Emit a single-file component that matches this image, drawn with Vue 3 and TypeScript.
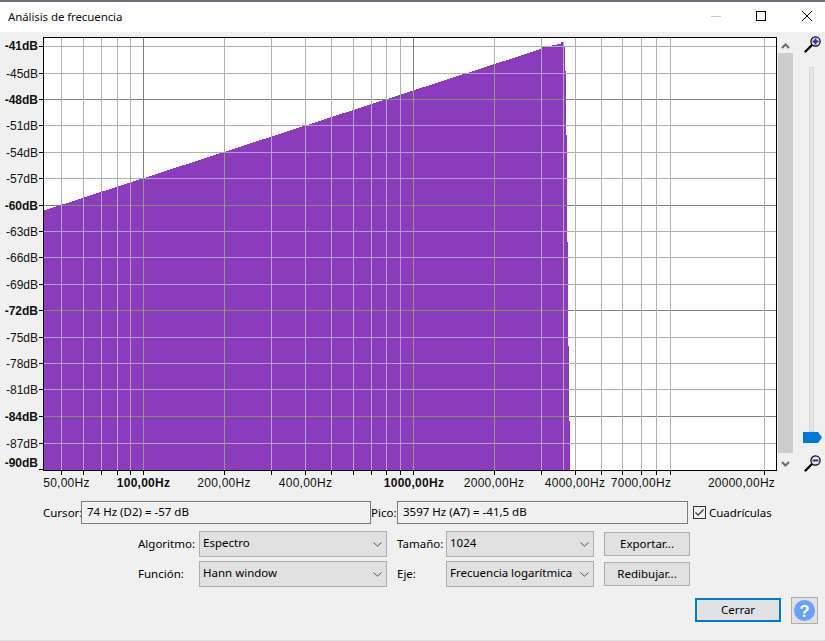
<template>
  <div class="window">
    <div class="titlebar">
      <span class="title">Análisis de frecuencia</span>
      <svg class="controls" width="117" height="30" viewBox="0 0 117 30" shape-rendering="crispEdges">
        <rect x="3" y="14" width="10" height="1" fill="#c4c4c4" />
        <rect x="48.5" y="9.5" width="9" height="9" fill="none" stroke="#000" />
        <path d="M94 9 L104 19 M104 9 L94 19" stroke="#000" fill="none" shape-rendering="auto" />
      </svg>
    </div>

    <div class="chart-row">
      <svg class="plot" width="778" height="458" viewBox="0 32 778 458" shape-rendering="crispEdges">
        <rect x="43" y="37" width="734" height="434" fill="#fff" />
        <polygon :points="spectrum" fill="#8b3cbc" />

        <!-- grid, the lines take another colour over the purple -->
        <g v-for="l in dbLines" :key="'h' + l.y">
          <rect x="44" :y="l.y" width="732" height="1" :fill="l.major ? '#808080' : '#b0b0b0'" />
          <rect :x="l.from" :y="l.y" :width="l.to - l.from" height="1" :fill="l.major ? '#7f8a72' : '#b79cd0'" />
          <rect x="39" :y="l.y" width="4" height="1" fill="#000" />
        </g>
        <g v-for="x in freqLines" :key="'v' + x.x">
          <rect :x="x.x" y="38" width="1" :height="topAt(x.x) - 38" :fill="x.major ? '#808080' : '#b0b0b0'" />
          <rect :x="x.x" :y="topAt(x.x)" width="1" :height="470 - topAt(x.x)" :fill="x.tone" />
          <rect :x="x.x" y="470" width="1" height="5" fill="#000" />
        </g>
        <rect x="563" y="42" width="1" height="428" fill="#b3a6bb" />

        <rect x="39" y="469" width="4" height="1" fill="#000" />
        <rect x="43.5" y="37.5" width="733" height="433" fill="none" stroke="#000" />

        <text
          v-for="t in dbLabels"
          :key="t.text"
          class="axis"
          :class="{ bold: t.bold }"
          x="38"
          :y="t.y"
          text-anchor="end"
        >{{ t.text }}</text>
        <text
          v-for="t in hzLabels"
          :key="t.text"
          class="axis hz"
          :class="{ bold: t.bold }"
          :x="t.x"
          y="487"
          text-anchor="middle"
        >{{ t.text }}</text>
      </svg>

      <div class="scrollbar">
        <div class="arrow up">
          <svg width="9" height="6" viewBox="0 0 9 6"><path d="M1 5 L4.5 1.5 L8 5" fill="none" stroke="#6a6a6a" stroke-width="2" /></svg>
        </div>
        <div class="thumb"></div>
        <div class="arrow down">
          <svg width="9" height="6" viewBox="0 0 9 6"><path d="M1 1 L4.5 4.5 L8 1" fill="none" stroke="#6a6a6a" stroke-width="2" /></svg>
        </div>
      </div>

      <div class="zoom">
        <svg class="mag" width="18" height="17" viewBox="0 0 18 17">
          <path d="M1.5 15.5 L7.5 9.5" stroke="#000" stroke-width="2.4" stroke-linecap="round" />
          <circle cx="11.5" cy="5.5" r="4.6" fill="#e8e8f4" stroke="#000" stroke-width="1.2" />
          <path d="M11.5 2.6 V8.4 M8.6 5.5 H14.4" stroke="#2a2ab0" stroke-width="2" />
        </svg>
        <div class="track"></div>
        <svg class="knob" width="19" height="11" viewBox="0 0 19 11"><path d="M0 0 H15 L19 5.5 L15 11 H0 Z" fill="#0078d7" /></svg>
        <svg class="mag out" width="18" height="17" viewBox="0 0 18 17">
          <path d="M1.5 15.5 L7.5 9.5" stroke="#000" stroke-width="2.4" stroke-linecap="round" />
          <circle cx="11.5" cy="5.5" r="4.6" fill="#e8e8f4" stroke="#000" stroke-width="1.2" />
          <path d="M8.6 5.5 H14.4" stroke="#2a2ab0" stroke-width="2" />
        </svg>
      </div>
    </div>

    <div class="readout">
      <label class="l-cursor">Cursor:</label>
      <div class="field f-cursor">74 Hz (D2) = -57 dB</div>
      <label class="l-pico">Pico:</label>
      <div class="field f-pico">3597 Hz (A7) = -41,5 dB</div>
      <span class="check">
        <svg width="13" height="13" viewBox="0 0 13 13">
          <rect x="0.5" y="0.5" width="12" height="12" fill="#f0f0f0" stroke="#333" />
          <path d="M2.5 6.5 L5.2 9.2 L10.5 3.5" fill="none" stroke="#333" stroke-width="1.2" />
        </svg>
      </span>
      <label class="l-grid">Cuadrículas</label>
    </div>

    <div v-for="row in rows" :key="row.label" class="row" :class="row.cls">
      <label class="l-first">{{ row.label }}</label>
      <div class="select s-first">
        <span>{{ row.value }}</span>
        <svg width="9" height="5" viewBox="0 0 9 5"><path d="M0.5 0.5 L4.5 4.2 L8.5 0.5" fill="none" stroke="#555" /></svg>
      </div>
      <label class="l-second">{{ row.label2 }}</label>
      <div class="select s-second">
        <span>{{ row.value2 }}</span>
        <svg width="9" height="5" viewBox="0 0 9 5"><path d="M0.5 0.5 L4.5 4.2 L8.5 0.5" fill="none" stroke="#555" /></svg>
      </div>
      <button class="btn side">{{ row.action }}</button>
    </div>

    <div class="footer">
      <button class="btn close">Cerrar</button>
      <div class="help">
        <svg width="21" height="21" viewBox="0 0 21 21">
          <circle cx="10.5" cy="10.5" r="10.5" fill="#6a9eff" />
          <text x="10.5" y="16.5" text-anchor="middle" class="q">?</text>
        </svg>
      </div>
    </div>
  </div>
</template>

<script setup lang="ts">
const slope = 0.3263

// right side of the spectrum drops in small stairs
const stairs: [number, number][] = [
  [565, 71],
  [566, 135],
  [567, 242],
  [568, 346],
  [569, 421],
  [570, 470]
]

function rightEdge(y: number): number {
  const stair = stairs.find((s) => y < s[1])
  return stair ? stair[0] : 570
}

function leftEdge(y: number): number {
  return y > 210 ? 44 : Math.round(44 + (210.5 - y) / slope)
}

const majorDb = [99, 205, 310, 416]
const dbLines = [46, 73, 99, 125, 152, 178, 205, 231, 257, 284, 310, 337, 363, 389, 416, 443].map((y) => {
  // above the top of the spectrum the whole line stays on white
  const from = y < 47 ? 0 : leftEdge(y)
  const to = y < 47 ? 0 : rightEdge(y)
  return { y, major: majorDb.includes(y), from, to }
})

const lilac = '#b7a2cb'
const green = '#909c80'
const freqLines = [
  { x: 61, major: false, tone: lilac },
  { x: 83, major: false, tone: lilac },
  { x: 101, major: false, tone: lilac },
  { x: 117, major: false, tone: lilac },
  { x: 130, major: false, tone: '#ad9fbb' },
  { x: 143, major: true, tone: green },
  { x: 224, major: false, tone: green },
  { x: 271, major: false, tone: lilac },
  { x: 305, major: false, tone: lilac },
  { x: 331, major: false, tone: lilac },
  { x: 353, major: false, tone: lilac },
  { x: 371, major: false, tone: lilac },
  { x: 386, major: false, tone: lilac },
  { x: 400, major: false, tone: '#ad9fbb' },
  { x: 413, major: true, tone: green },
  { x: 494, major: false, tone: green },
  { x: 541, major: false, tone: lilac },
  { x: 575, major: false, tone: '#b0b0b0' },
  { x: 601, major: false, tone: '#b0b0b0' },
  { x: 622, major: false, tone: '#b0b0b0' },
  { x: 641, major: false, tone: '#b0b0b0' },
  { x: 656, major: false, tone: '#b0b0b0' },
  { x: 670, major: false, tone: '#b0b0b0' },
  { x: 764, major: false, tone: '#b0b0b0' }
]

const spectrum = [
  '44,210.5',
  '541,49',
  '542,47',
  '552,47',
  '552,45',
  '557,45',
  '557,43.5',
  '561,43.5',
  '561,42',
  '564,42',
  '564,46',
  '565,46',
  ...stairs.flatMap(([x, y], i) => (i < stairs.length - 1 ? [`${x},${y}`, `${x + 1},${y}`] : [`${x},${y}`])),
  '44,470'
].join(' ')

function topAt(x: number): number {
  if (x > 570) return 470
  return Math.round(210.5 - (x - 44) * slope)
}

const dbLabels = [
  ['-41dB', 50, true],
  ['-45dB', 78, false],
  ['-48dB', 104, true],
  ['-51dB', 130, false],
  ['-54dB', 157, false],
  ['-57dB', 183, false],
  ['-60dB', 210, true],
  ['-63dB', 236, false],
  ['-66dB', 262, false],
  ['-69dB', 289, false],
  ['-72dB', 315, true],
  ['-75dB', 342, false],
  ['-78dB', 368, false],
  ['-81dB', 394, false],
  ['-84dB', 421, true],
  ['-87dB', 448, false],
  ['-90dB', 467, true]
].map(([text, y, bold]) => ({ text: text as string, y: y as number, bold: bold as boolean }))

const hzLabels = [
  { text: '50,00Hz', x: 66.5, bold: false },
  { text: '100,00Hz', x: 143.5, bold: true },
  { text: '200,00Hz', x: 224, bold: false },
  { text: '400,00Hz', x: 305.5, bold: false },
  { text: '1000,00Hz', x: 414, bold: true },
  { text: '2000,00Hz', x: 494, bold: false },
  { text: '4000,00Hz', x: 575, bold: false },
  { text: '7000,00Hz', x: 641, bold: false },
  { text: '20000,00Hz', x: 741.5, bold: false }
]

const rows = [
  { cls: 'r-alg', label: 'Algoritmo:', value: 'Espectro', label2: 'Tamaño:', value2: '1024', action: 'Exportar...' },
  { cls: 'r-fun', label: 'Función:', value: 'Hann window', label2: 'Eje:', value2: 'Frecuencia logarítmica', action: 'Redibujar...' }
]
</script>

<style>
html,
body {
  margin: 0;
  background: #f0f0f0;
}
</style>

<style scoped>
.window {
  width: 825px;
  height: 641px;
  box-sizing: border-box;
  overflow: hidden;
  display: flex;
  flex-direction: column;
  background: #f0f0f0;
  border-top: 2px solid #70707c;
  border-bottom: 1px solid #dedede;
  font-family: "Noto Sans", "Open Sans", sans-serif;
  font-size: 11.5px;
  color: #000;
}

.titlebar {
  height: 30px;
  flex: none;
  display: flex;
  align-items: center;
  justify-content: space-between;
  background: #fff;
  padding-left: 8px;
  color: #111;
}

.title {
  margin-top: -2px;
  letter-spacing: -0.1px;
}

.chart-row {
  flex: none;
  height: 458px;
  display: flex;
}

.plot {
  flex: none;
  display: block;
}

.axis {
  font-family: "Liberation Sans", Arial, sans-serif;
  font-size: 12px;
  fill: #111;
}

.hz {
  letter-spacing: 0.25px;
}

.bold {
  font-weight: 700;
}

.scrollbar {
  width: 15px;
  flex: none;
  display: flex;
  flex-direction: column;
}

.arrow {
  display: flex;
  justify-content: center;
}

.arrow.up {
  height: 21px;
  padding-top: 11px;
  box-sizing: border-box;
}

.arrow.down {
  padding-top: 8px;
}

.thumb {
  height: 400px;
  background: #cdcdcd;
}

.zoom {
  flex: 1;
  display: flex;
  flex-direction: column;
  align-items: flex-start;
  padding-top: 4px;
  padding-left: 11px;
}

.track {
  width: 3px;
  height: 363px;
  margin: 14px 0 0 5px;
  background: #e6e6e6;
  border: 1px solid #d6d6d6;
}

.knob {
  display: block;
  margin-left: -1px;
}

.mag.out {
  margin-top: 12px;
}

.readout {
  flex: none;
  height: 23px;
  margin-top: 11px;
  padding-left: 43px;
  display: flex;
  align-items: center;
}

.l-cursor {
  width: 38px;
}

.l-pico {
  width: 26px;
}

.field {
  height: 23px;
  box-sizing: border-box;
  line-height: 20px;
  padding-left: 5px;
  border: 1px solid #7a7a7a;
  background: #f0f0f0;
  box-shadow: inset 0 0 0 1px #f6f6f6;
}

.f-cursor {
  width: 290px;
}

.f-pico {
  width: 291px;
}

.check {
  margin-left: 5px;
  display: flex;
}

.l-grid {
  margin-left: 3px;
  letter-spacing: -0.05px;
}

.row {
  flex: none;
  height: 26px;
  padding-left: 138px;
  display: flex;
  align-items: flex-start;
}

.r-alg {
  margin-top: 7px;
}

.r-fun {
  margin-top: 4px;
}

.row label {
  line-height: 26px;
}

.l-first {
  width: 61px;
}

.l-second {
  width: 49px;
  margin-left: 10px;
}

.select {
  height: 26px;
  box-sizing: border-box;
  display: flex;
  align-items: center;
  justify-content: space-between;
  padding: 0 4px 0 3px;
  background: #e1e1e1;
  border: 1px solid #adadad;
  white-space: nowrap;
}

.select span {
  margin-top: -4px;
}

.s-first {
  width: 188px;
}

.s-second {
  width: 148px;
}

.btn {
  height: 24px;
  padding: 0 0 2px;
  font: inherit;
  color: #000;
  background: #e1e1e1;
  border: 1px solid #adadad;
  border-radius: 0;
}

.side {
  width: 86px;
  margin: 1px 0 0 10px;
}

.footer {
  flex: none;
  margin-top: 10px;
  padding-left: 695px;
  display: flex;
  align-items: flex-start;
}

.close {
  width: 86px;
  margin-top: 1px;
  border: 2px solid #0078d7;
}

.help {
  width: 27px;
  height: 27px;
  margin-left: 10px;
  box-sizing: border-box;
  display: flex;
  align-items: center;
  justify-content: center;
  background: #e1e1e1;
  border: 1px solid #adadad;
}

.q {
  font-family: "Liberation Sans", Arial, sans-serif;
  font-size: 17px;
  font-weight: 700;
  fill: #fff;
}
</style>
